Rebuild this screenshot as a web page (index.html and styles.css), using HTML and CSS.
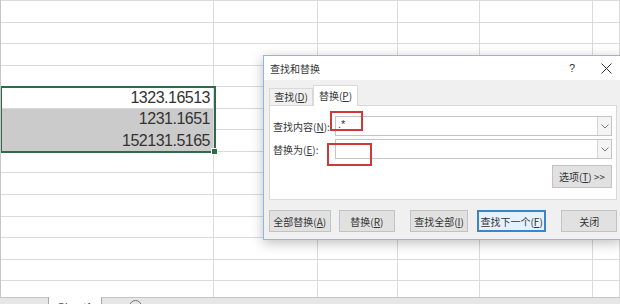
FILE: index.html
```html
<!DOCTYPE html>
<html>
<head>
<meta charset="utf-8">
<link rel="stylesheet" href="styles.css">
</head>
<body>
<div class="sheet">
  <div class="rows">
    <div class="row"><div class="cell"></div><div class="cell"></div><div class="cell"></div><div class="cell"></div><div class="cell"></div><div class="cell"></div></div>
    <div class="row"><div class="cell"></div><div class="cell"></div><div class="cell"></div><div class="cell"></div><div class="cell"></div><div class="cell"></div></div>
    <div class="row"><div class="cell"></div><div class="cell"></div><div class="cell"></div><div class="cell"></div><div class="cell"></div><div class="cell"></div></div>
    <div class="row"><div class="cell"></div><div class="cell"></div><div class="cell"></div><div class="cell"></div><div class="cell"></div><div class="cell"></div></div>
    <div class="row"><div class="cell"></div><div class="cell"></div><div class="cell"></div><div class="cell"></div><div class="cell"></div><div class="cell"></div></div>
    <div class="row"><div class="cell num">1323.16513</div><div class="cell"></div><div class="cell"></div><div class="cell"></div><div class="cell"></div><div class="cell"></div></div>
    <div class="row"><div class="cell num sel">1231.1651</div><div class="cell"></div><div class="cell"></div><div class="cell"></div><div class="cell"></div><div class="cell"></div></div>
    <div class="row"><div class="cell num sel">152131.5165</div><div class="cell"></div><div class="cell"></div><div class="cell"></div><div class="cell"></div><div class="cell"></div></div>
    <div class="row"><div class="cell"></div><div class="cell"></div><div class="cell"></div><div class="cell"></div><div class="cell"></div><div class="cell"></div></div>
    <div class="row"><div class="cell"></div><div class="cell"></div><div class="cell"></div><div class="cell"></div><div class="cell"></div><div class="cell"></div></div>
    <div class="row"><div class="cell"></div><div class="cell"></div><div class="cell"></div><div class="cell"></div><div class="cell"></div><div class="cell"></div></div>
    <div class="row"><div class="cell"></div><div class="cell"></div><div class="cell"></div><div class="cell"></div><div class="cell"></div><div class="cell"></div></div>
    <div class="row"><div class="cell"></div><div class="cell"></div><div class="cell"></div><div class="cell"></div><div class="cell"></div><div class="cell"></div></div>
    <div class="row"><div class="cell"></div><div class="cell"></div><div class="cell"></div><div class="cell"></div><div class="cell"></div><div class="cell"></div></div>
    <div class="row"><div class="cell"></div><div class="cell"></div><div class="cell"></div><div class="cell"></div><div class="cell"></div><div class="cell"></div></div>
  </div>
  <div class="range"><span class="handle"></span></div>
</div>

<div class="tabbar">
  <div class="tab-nav"></div>
  <div class="sheet-tab">Sheet1</div>
  <div class="add-sheet"></div>
</div>

<div class="dialog">
  <div class="titlebar">
    <span class="title">查找和替换</span>
    <span class="help">?</span>
    <span class="close">
      <svg width="11" height="11" viewBox="0 0 11 11"><path d="M0.5 0.5 L10.5 10.5 M10.5 0.5 L0.5 10.5" stroke="#333" stroke-width="1" fill="none"/></svg>
    </span>
  </div>
  <div class="dlg-body">
    <div class="tabs">
      <div class="tab-btn">查找(<u>D</u>)</div>
      <div class="tab-btn active">替换(<u>P</u>)</div>
    </div>
    <div class="panel">
      <div class="field">
        <label>查找内容(<u>N</u>):</label>
        <div class="combo">
          <span class="val">.*</span>
          <span class="drop"><svg width="8" height="5" viewBox="0 0 8 5"><path d="M0.5 0.5 L4 4 L7.5 0.5" stroke="#777" fill="none"/></svg></span>
        </div>
      </div>
      <div class="field">
        <label>替换为(<u>E</u>):</label>
        <div class="combo">
          <span class="val"></span>
          <span class="drop"><svg width="8" height="5" viewBox="0 0 8 5"><path d="M0.5 0.5 L4 4 L7.5 0.5" stroke="#777" fill="none"/></svg></span>
        </div>
      </div>
      <div class="opts"><button class="btn btn-opts">选项(<u>T</u>) &gt;&gt;</button></div>
    </div>
    <div class="actions">
      <button class="btn b-all">全部替换(<u>A</u>)</button>
      <button class="btn b-rep">替换(<u>R</u>)</button>
      <button class="btn b-findall">查找全部(<u>I</u>)</button>
      <button class="btn b-next">查找下一个(<u>F</u>)</button>
      <button class="btn b-close">关闭</button>
    </div>
  </div>
  <span class="mark mark-find"></span>
  <span class="mark mark-rep"></span>
</div>
</body>
</html>
```

FILE: styles.css
```css
body{
    margin: 0;
    width: 620px;
    height: 304px;
    overflow: hidden;
    position: relative;
    background: #fff;
    font-family: "Noto Sans CJK SC", "Liberation Sans", sans-serif;
}

/* spreadsheet */
.sheet{
    position: relative;
    height: 297px;
    overflow: hidden;
    border-left: 1px solid #c6c6c6;
    box-sizing: border-box;
}
.rows{
    margin-top: -20.5px;
}
.row{
    display: grid;
    grid-template-columns: 213px 104px 80px 82px 113px 1fr;
    height: 21.55px;
}
.cell{
    border-right: 1px solid #dadada;
    border-bottom: 1px solid #dadada;
}
.num{
    display: flex;
    align-items: flex-end;
    justify-content: flex-end;
    padding: 0 3px 1px 0;
    font-family: "Liberation Sans", Arial, sans-serif;
    font-size: 16px;
    letter-spacing: -0.5px;
    color: #333;
    line-height: 18px;
}
.sel{
    background: #cbcbcb;
    border-bottom-color: #cbcbcb;
}
.range{
    position: absolute;
    left: -1px;
    top: 86px;
    width: 216px;
    height: 67px;
    border: 2px solid #2f6b4a;
    box-sizing: border-box;
}
.handle{
    position: absolute;
    right: -4px;
    bottom: -4px;
    width: 5px;
    height: 5px;
    background: #2f6b4a;
    border: 1px solid #fff;
}

/* sheet tabs */
.tabbar{
    display: flex;
    height: 7px;
    background: #e6e6e6;
    border-top: 1px solid #c6c6c6;
    box-sizing: border-box;
}
.tab-nav{
    width: 48px;
}
.sheet-tab{
    width: 52px;
    background: #fff;
    border-left: 1px solid #a8a8a8;
    border-right: 1px solid #a8a8a8;
    margin-top: -1px;
    font-family: "Liberation Sans", Arial, sans-serif;
    font-size: 11px;
    color: #444;
    text-align: center;
    line-height: 16px;
    padding-top: 2px;
    overflow: hidden;
}
.add-sheet{
    width: 11px;
    height: 11px;
    border: 1px solid #777;
    border-radius: 50%;
    margin: 2px 0 0 27px;
}

/* find & replace dialog */
.dialog{
    position: absolute;
    left: 263px;
    top: 55px;
    width: 359px;
    height: 185px;
    border: 1px solid #8fb6de;
    box-sizing: border-box;
    background: #f0f0f0;
    box-shadow: 0 3px 12px rgba(0,0,0,0.25);
    font-size: 10px;
    color: #333;
}
.titlebar{
    display: flex;
    align-items: center;
    height: 24px;
    background: #fff;
}
.title{
    flex: 1;
    padding-left: 6px;
}
.help{
    width: 20px;
    text-align: center;
    font-family: "Liberation Sans", Arial, sans-serif;
    font-size: 11px;
    color: #333;
    margin-right: 9px;
}
.close{
    width: 30px;
    display: flex;
    justify-content: center;
}
.dlg-body{
    padding: 0 4px 0 5px;
}
.tabs{
    display: flex;
    align-items: flex-end;
    height: 25px;
}
.tab-btn{
    width: 44px;
    height: 17px;
    line-height: 16px;
    text-align: center;
    border: 1px solid #d9d9d9;
    border-bottom: none;
    box-sizing: border-box;
    background: #f0f0f0;
}
.tab-btn.active{
    width: 45px;
    height: 21px;
    line-height: 19px;
    margin-bottom: -1px;
    background: #fff;
    position: relative;
    z-index: 1;
}
.panel{
    height: 95px;
    background: #fff;
    border: 1px solid #d9d9d9;
    box-sizing: border-box;
    padding: 10px 4px 0 3px;
}
.field{
    display: flex;
    align-items: center;
    height: 20px;
    margin-bottom: 3px;
}
.field label{
    width: 62px;
}
.combo{
    flex: 1;
    display: flex;
    height: 20px;
    border: 1px solid #c4c4c4;
    box-sizing: border-box;
}
.val{
    flex: 1;
    padding-left: 2px;
    line-height: 14px;
    font-family: "Liberation Sans", Arial, sans-serif;
    font-size: 11px;
}
.drop{
    width: 13px;
    border-left: 1px solid #d6d6d6;
    background: #f4f4f4;
    display: flex;
    align-items: center;
    justify-content: center;
}
.opts{
    display: flex;
    justify-content: flex-end;
    margin-top: 6px;
}
.btn{
    height: 22px;
    padding: 0;
    background: #e1e1e1;
    border: 1px solid #c2c2c2;
    font-family: "Noto Sans CJK SC", "Liberation Sans", sans-serif;
    font-size: 10px;
    color: #333;
}
.btn-opts{
    width: 60px;
    height: 23px;
}
.actions{
    display: flex;
    margin-top: 10px;
}
.b-all{ width: 62px; }
.b-rep{ width: 57px; margin-left: 8px; }
.b-findall{ width: 58px; margin-left: 15px; }
.b-next{
    width: 70px;
    margin-left: 9px;
    background: #e5f1fb;
    border-color: #3c86c8;
    box-shadow: inset 0 0 0 1px #3c86c8;
}
.b-close{ width: 56px; margin-left: 15px; }

/* red annotation boxes */
.mark{
    position: absolute;
    border: 2px solid #cc3a3a;
    box-sizing: border-box;
}
.mark-find{
    left: 66px;
    top: 55px;
    width: 33px;
    height: 20px;
}
.mark-rep{
    left: 63px;
    top: 87px;
    width: 45px;
    height: 23px;
}
```
